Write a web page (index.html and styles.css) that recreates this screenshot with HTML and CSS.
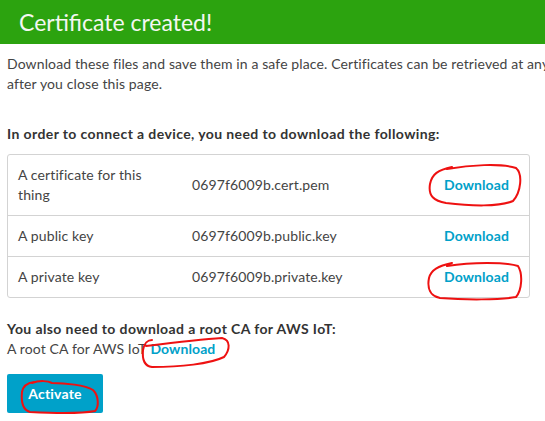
FILE: index.html
```html
<!DOCTYPE html>
<html>
<head>
<meta charset="utf-8">
<link rel="stylesheet" href="styles.css">
</head>
<body>
<header class="banner"><h1 class="banner-title">Certificate created!</h1></header>
<main class="content">
  <p class="intro">Download these files and save them in a safe place. Certificates can be retrieved at any time</p>
  <p class="intro intro-2">after you close this page.</p>
  <h2 class="section-title">In order to connect a device, you need to download the following:</h2>
  <div class="files">
    <div class="file-row">
      <div class="cell name">A certificate for this thing</div>
      <div class="cell file">0697f6009b.cert.pem</div>
      <div class="cell action"><a class="link">Download</a></div>
    </div>
    <div class="file-row">
      <div class="cell name">A public key</div>
      <div class="cell file">0697f6009b.public.key</div>
      <div class="cell action"><a class="link">Download</a></div>
    </div>
    <div class="file-row">
      <div class="cell name">A private key</div>
      <div class="cell file">0697f6009b.private.key</div>
      <div class="cell action"><a class="link">Download</a></div>
    </div>
  </div>
  <h2 class="section-title root-title">You also need to download a root CA for AWS IoT:</h2>
  <p class="root-line">A root CA for AWS IoT<a class="link root-link">Download</a></p>
  <button class="activate">Activate</button>
</main>
<svg class="marks" width="545" height="421" viewBox="0 0 545 421">
  <path d="M447 169 C470 165 500 163 516 168 C523 174 521 192 513 201 C500 207 470 206 446 203 C434 201 428 196 430 184 C432 174 438 170 452 167" />
  <path d="M447 266 C472 262 505 262 518 266 C523 274 522 290 516 297 C500 300 465 300 440 298 C430 296 427 288 429 278 C431 270 438 266 452 263" />
  <path d="M146 346 C170 343 205 339 222 338 C231 340 230 350 224 357 C210 364 180 367 152 367 C144 366 142 360 143 350 C144 343 148 340 152 340" />
  <path d="M32 383 C40 380 48 381 52 383 C65 383 85 385 93 390 C99 396 99 407 95 411 C80 414 50 413 30 412 C23 410 21 402 22 392 C23 386 27 383 34 382" />
</svg>
</body>
</html>
```
FILE: styles.css
```css
html, body {
  margin: 0;
  padding: 0;
  background: #ffffff;
}
body {
  font-family: Lato, "Open Sans", sans-serif;
  color: #444444;
  letter-spacing: 0.12px;
  width: 545px;
  height: 421px;
  overflow: hidden;
  position: relative;
}
.banner {
  background: #2ca30f;
  height: 44px;
  display: flex;
  align-items: center;
  padding-left: 19px;
}
.banner-title {
  margin: 0;
  font-size: 23px;
  font-weight: 400;
  color: #f4f7f2;
  letter-spacing: 0;
}
.content {
  padding-left: 7px;
}
.intro {
  margin: 10px 0 0 0;
  font-size: 14px;
  line-height: 20px;
  white-space: nowrap;
  height: 20px;
}
.intro-2 {
  margin-top: 0;
}
.section-title {
  margin: 30px 0 0 0;
  font-size: 14px;
  line-height: 20px;
  font-weight: 700;
  color: #333333;
  letter-spacing: 0.4px;
}
.files {
  margin-top: 10px;
  width: 521px;
  border: 1px solid #d3d3d3;
  border-radius: 3px;
}
.file-row {
  display: grid;
  grid-template-columns: 174px 252px 1fr;
  align-items: center;
  border-bottom: 1px solid #d3d3d3;
}
.file-row:last-child {
  border-bottom: none;
}
.cell {
  padding: 10px 10px;
  font-size: 14px;
  line-height: 20px;
}
.name {
  padding-right: 20px;
}
.link {
  color: #00a1c9;
  font-weight: 700;
  font-size: 14px;
  letter-spacing: 0.1px;
  cursor: pointer;
}
.root-link {
  margin-left: 4px;
}
.root-title {
  margin-top: 21px;
}
.root-line {
  margin: 0;
  font-size: 14px;
  line-height: 20px;
}
.activate {
  margin-top: 15px;
  width: 96px;
  height: 39px;
  background: #00a1c9;
  border: none;
  border-radius: 2px;
  color: #ffffff;
  font-family: Lato, "Open Sans", sans-serif;
  font-weight: 700;
  font-size: 14px;
  letter-spacing: 0.2px;
  padding: 0;
}
.marks {
  position: absolute;
  left: 0;
  top: 0;
  pointer-events: none;
}
.marks path {
  fill: none;
  stroke: #ee1111;
  stroke-width: 2;
  stroke-linecap: round;
}
```
